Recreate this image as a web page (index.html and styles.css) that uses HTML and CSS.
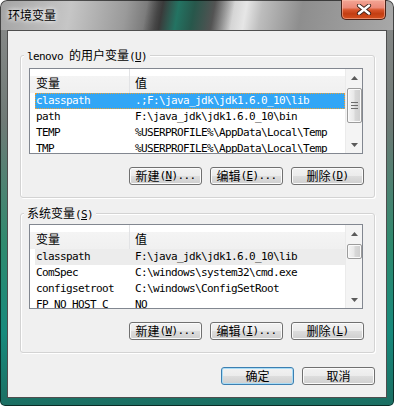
FILE: index.html
```html
<!DOCTYPE html>
<html lang="zh-CN">
<head>
    <meta charset="utf-8" />
    <title>环境变量</title>
    <link rel="stylesheet" href="styles.css">
</head>
<body>

    <div class="window">
        <!-- Glass title bar -->
        <div class="titlebar">
            <span class="title">环境变量</span>
            <div class="close">
                <svg width="16" height="11" viewBox="0 0 16 11">
                    <path d="M3 1.5 L13 9.5 M13 1.5 L3 9.5" stroke="#3b2118" stroke-width="4.2" stroke-linecap="round" />
                    <path d="M3 1.5 L13 9.5 M13 1.5 L3 9.5" stroke="#ffffff" stroke-width="2.4" stroke-linecap="round" />
                </svg>
            </div>
        </div>

        <div class="client">

            <!-- User variables -->
            <div class="group">
                <div class="group-title"><span class="mono">lenovo </span>的用户变量<span class="mono">(<u>U</u>)</span></div>
                <div class="list list-user">
                    <div class="list-body">
                        <div class="list-head">
                            <div class="col-name">变量</div>
                            <div class="col-value">值</div>
                        </div>
                        <div class="row selected"><div class="cell-name">classpath</div><div class="cell-value">.;F:\java_jdk\jdk1.6.0_10\lib</div></div>
                        <div class="row"><div class="cell-name">path</div><div class="cell-value">F:\java_jdk\jdk1.6.0_10\bin</div></div>
                        <div class="row"><div class="cell-name">TEMP</div><div class="cell-value">%USERPROFILE%\AppData\Local\Temp</div></div>
                        <div class="row"><div class="cell-name">TMP</div><div class="cell-value">%USERPROFILE%\AppData\Local\Temp</div></div>
                    </div>
                    <div class="scrollbar">
                        <div class="arrow"><svg width="7" height="4" viewBox="0 0 7 4"><path d="M0 4 L3.5 0 L7 4 Z" fill="#5a5a5a" /></svg></div>
                        <div class="track">
                            <div class="thumb">
                                <svg width="7" height="7" viewBox="0 0 7 7"><path d="M0 0.5 H7 M0 3.5 H7 M0 6.5 H7" stroke="#6d6d6d" stroke-width="1" /></svg>
                            </div>
                        </div>
                        <div class="arrow"><svg width="7" height="4" viewBox="0 0 7 4"><path d="M0 0 L7 0 L3.5 4 Z" fill="#5a5a5a" /></svg></div>
                    </div>
                </div>
                <div class="buttons">
                    <div class="btn">新建<span class="mono">(<u>N</u>)...</span></div>
                    <div class="btn">编辑<span class="mono">(<u>E</u>)...</span></div>
                    <div class="btn">删除<span class="mono">(<u>D</u>)</span></div>
                </div>
            </div>

            <!-- System variables -->
            <div class="group">
                <div class="group-title">系统变量<span class="mono">(<u>S</u>)</span></div>
                <div class="list list-system">
                    <div class="list-body">
                        <div class="list-head">
                            <div class="col-name">变量</div>
                            <div class="col-value">值</div>
                        </div>
                        <div class="row inactive"><div class="cell-name">classpath</div><div class="cell-value">F:\java_jdk\jdk1.6.0_10\lib</div></div>
                        <div class="row"><div class="cell-name">ComSpec</div><div class="cell-value">C:\windows\system32\cmd.exe</div></div>
                        <div class="row"><div class="cell-name">configsetroot</div><div class="cell-value">C:\windows\ConfigSetRoot</div></div>
                        <div class="row"><div class="cell-name">FP_NO_HOST_C</div><div class="cell-value">NO</div></div>
                    </div>
                    <div class="scrollbar">
                        <div class="arrow"><svg width="7" height="4" viewBox="0 0 7 4"><path d="M0 4 L3.5 0 L7 4 Z" fill="#5a5a5a" /></svg></div>
                        <div class="track">
                            <div class="thumb small"></div>
                        </div>
                        <div class="arrow"><svg width="7" height="4" viewBox="0 0 7 4"><path d="M0 0 L7 0 L3.5 4 Z" fill="#5a5a5a" /></svg></div>
                    </div>
                </div>
                <div class="buttons">
                    <div class="btn">新建<span class="mono">(<u>W</u>)...</span></div>
                    <div class="btn">编辑<span class="mono">(<u>I</u>)...</span></div>
                    <div class="btn">删除<span class="mono">(<u>L</u>)</span></div>
                </div>
            </div>

            <!-- Dialog buttons -->
            <div class="actions">
                <div class="btn default">确定</div>
                <div class="btn">取消</div>
            </div>

        </div>
    </div>

</body>
</html>
```

FILE: styles.css
```css
/* Page */
body {
    margin: 0;
    background: #ffffff;
    font-family: "Noto Sans CJK SC", sans-serif;
    font-size: 12px;
    color: #000;
}

/* Latin text in the dialog looks like a bitmap monospace */
.mono {
    font-family: "DejaVu Sans Mono", monospace;
    font-size: 11px;
    letter-spacing: -0.62px;
}

/* Window frame with a rough Aero glass look */
.window {
    width: 394px;
    height: 406px;
    box-sizing: border-box;
    display: flex;
    flex-direction: column;
    border-radius: 7px 7px 5px 5px;
    overflow: hidden;
    box-shadow: inset 0 0 0 1px rgba(0, 0, 0, 0.6);
    background:
        linear-gradient(100deg, rgba(0,0,0,0) 37%, rgba(40,40,40,0.75) 41%, rgba(18,112,92,0.85) 45%, rgba(10,70,55,0.8) 49%, rgba(40,40,40,0.7) 54%, rgba(0,0,0,0) 59%) top / 100% 30px no-repeat,
        linear-gradient(100deg, #a3a3a3 0%, #c6c6c6 18%, #9a9a9a 32%, #6a6a6a 40%, #e6e6e6 62%, #bdbdbd 66%, #8e8e8e 76%, #a8a8a8 100%) top / 100% 30px no-repeat,
        linear-gradient(180deg, #8c8c8c 0%, #6f7a76 30%, #2f8a6e 60%, #178a7c 82%, #1b6e62 100%);
}

/* Title bar */
.titlebar {
    height: 30px;
    flex-shrink: 0;
    display: flex;
    justify-content: space-between;
    align-items: flex-start;
}

.title {
    margin: 8px 0 0 8px;
    font-size: 12px;
    line-height: 14px;
    text-shadow: 0 0 4px #ffffff, 0 0 7px rgba(255, 255, 255, 0.9);
}

.close {
    width: 45px;
    height: 20px;
    margin-right: 8px;
    box-sizing: border-box;
    border: 1px solid #4a2218;
    border-top: none;
    border-radius: 0 0 5px 5px;
    background: linear-gradient(#f3a595 0%, #ec8a78 40%, #d8552c 52%, #c33e12 72%, #d4501f 100%);
    box-shadow: inset 0 0 0 1px rgba(255, 200, 180, 0.5);
    display: flex;
    align-items: center;
    justify-content: center;
}

/* Client area */
.client {
    flex: 1;
    margin: 0 7px 8px 7px;
    border: 1px solid #4e4e4e;
    background: #f0f0f0;
    padding: 0 11px 0 12px;
    display: flex;
    flex-direction: column;
}

/* Group boxes */
.group {
    margin-top: 24px;
    border: 1px solid #d3d3d3;
    border-radius: 3px;
    box-shadow: inset 1px 1px 0 #ffffff, 1px 1px 0 #ffffff;
    padding: 0 10px 12px 8px;
}

.group + .group {
    margin-top: 15px;
}

.group-title {
    width: fit-content;
    height: 14px;
    margin: -8px 0 0 -5px;
    padding: 0 3px;
    background: #f0f0f0;
    line-height: 14px;
}

/* List views */
.list {
    display: flex;
    margin: 6px 1px 0 0;
    height: 86px;
    box-sizing: border-box;
    border: 1px solid #828790;
    background: #ffffff;
}

.list-system {
    margin-top: 4px;
    height: 85px;
}

.list-body {
    flex: 1;
    min-width: 0;
    overflow: hidden;
}

.list-head {
    display: flex;
    height: 24px;
    background: linear-gradient(#ffffff 0, #ffffff 7px, #f4f4f4 7px, #f0f0f0 100%);
}

.col-name {
    width: 100px;
    box-sizing: border-box;
    border-right: 1px solid #e2e3e5;
    padding: 3px 0 0 6px;
    line-height: 21px;
}

.col-value {
    padding: 3px 0 0 5px;
    line-height: 21px;
}

.row {
    display: flex;
    height: 16px;
    margin-left: 5px;
    line-height: 16px;
    font-family: "DejaVu Sans Mono", monospace;
    font-size: 11px;
    letter-spacing: -0.62px;
    white-space: nowrap;
}

.cell-name {
    width: 100px;
    flex-shrink: 0;
    box-sizing: border-box;
    padding-left: 1px;
    overflow: hidden;
}

.row.selected {
    background: #32a6f6;
    color: #ffffff;
    outline: 1px dotted #efa032;
    outline-offset: -1px;
}

.row.inactive {
    background: #ececec;
}

/* Scrollbars */
.scrollbar {
    width: 17px;
    flex-shrink: 0;
    box-sizing: border-box;
    border-left: 1px solid #ebebeb;
    background: #f4f4f4;
    display: flex;
    flex-direction: column;
}

.arrow {
    height: 17px;
    display: flex;
    align-items: center;
    justify-content: center;
}

.track {
    flex: 1;
    padding-top: 2px;
}

.thumb {
    height: 35px;
    margin-left: 1px;
    box-sizing: border-box;
    border: 1px solid #9c9c9c;
    border-radius: 2px;
    background: linear-gradient(90deg, #f5f5f5 0%, #e8e8e8 45%, #d8d8d8 55%, #cecece 100%);
    box-shadow: inset 0 0 0 1px #fafafa;
    display: flex;
    align-items: center;
    justify-content: center;
}

.thumb.small {
    height: 15px;
}

/* Push buttons */
.buttons {
    display: flex;
    justify-content: flex-end;
    gap: 8px;
    margin-top: 13px;
}

.btn {
    width: 73px;
    height: 18px;
    box-sizing: border-box;
    border: 1px solid #707070;
    border-radius: 3px;
    background: linear-gradient(#f2f2f2 0%, #ebebeb 50%, #dddddd 51%, #cfcfcf 100%);
    box-shadow: inset 0 0 0 1px #fbfbfb;
    line-height: 16px;
    display: flex;
    align-items: center;
    justify-content: center;
    white-space: nowrap;
}

.btn.default {
    border-color: #3c7fb1;
    box-shadow: inset 0 0 0 1px #a9dcf6;
}

.actions {
    display: flex;
    justify-content: flex-end;
    gap: 8px;
    margin-top: 14px;
}
```
